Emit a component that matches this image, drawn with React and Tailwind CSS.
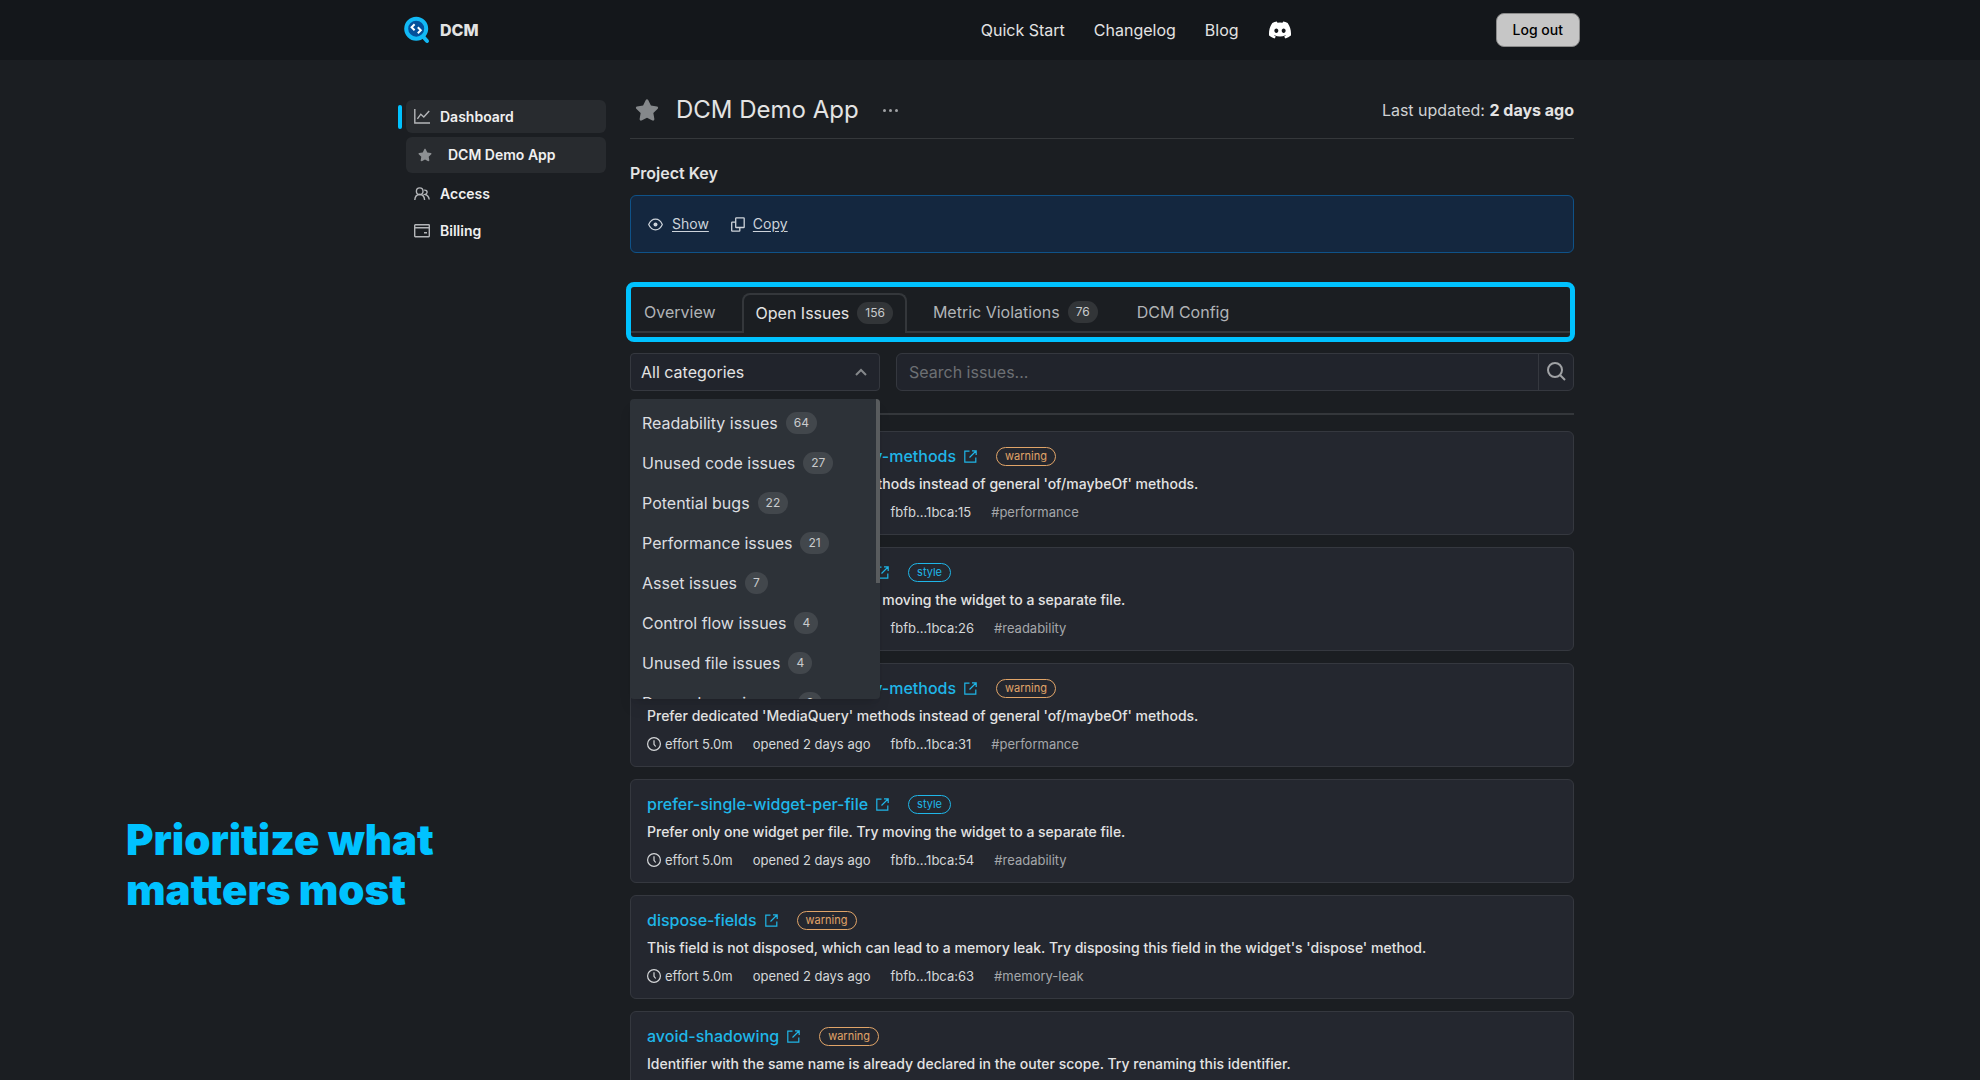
import { useState } from 'react';
import { FaDiscord, FaStar } from 'react-icons/fa';

const categories = [
  { name: 'Readability issues', count: 64 },
  { name: 'Unused code issues', count: 27 },
  { name: 'Potential bugs', count: 22 },
  { name: 'Performance issues', count: 21 },
  { name: 'Asset issues', count: 7 },
  { name: 'Control flow issues', count: 4 },
  { name: 'Unused file issues', count: 4 },
  { name: 'Dependency issues', count: 3 },
];

const mediaQuery = "Prefer dedicated 'MediaQuery' methods instead of general 'of/maybeOf' methods.";
const singleWidget = 'Prefer only one widget per file. Try moving the widget to a separate file.';

const issues = [
  { rule: 'prefer-dedicated-media-query-methods', severity: 'warning', text: mediaQuery, line: 15, tag: '#performance' },
  { rule: 'prefer-single-widget-per-file', severity: 'style', text: singleWidget, line: 26, tag: '#readability' },
  { rule: 'prefer-dedicated-media-query-methods', severity: 'warning', text: mediaQuery, line: 31, tag: '#performance' },
  { rule: 'prefer-single-widget-per-file', severity: 'style', text: singleWidget, line: 54, tag: '#readability' },
  {
    rule: 'dispose-fields',
    severity: 'warning',
    text: "This field is not disposed, which can lead to a memory leak. Try disposing this field in the widget's 'dispose' method.",
    line: 63,
    tag: '#memory-leak',
  },
  {
    rule: 'avoid-shadowing',
    severity: 'warning',
    text: 'Identifier with the same name is already declared in the outer scope. Try renaming this identifier.',
    line: 78,
    tag: '#readability',
  },
];

const tabs = [
  { id: 'overview', label: 'Overview' },
  { id: 'issues', label: 'Open Issues', count: 156 },
  { id: 'metrics', label: 'Metric Violations', count: 76 },
  { id: 'config', label: 'DCM Config' },
];

function Logo() {
  return (
    <svg width="26" height="28" viewBox="0 0 26 28" fill="none" aria-hidden="true">
      <path d="M19 20.500l4 4.500" stroke="#12b9f5" strokeWidth="4" strokeLinecap="round" />
      <circle cx="12.200" cy="12.700" r="10" fill="#04509b" stroke="#12b9f5" strokeWidth="4" />
      <path d="M10.600 8.200L7.600 11.200l3 3M13.800 11.200l3 3-3 3" stroke="#fff" strokeWidth="2" />
    </svg>
  );
}

function ChartIcon() {
  return (
    <svg width="16" height="15" viewBox="0 0 16 15" fill="none" stroke="currentColor" strokeWidth="1.400" aria-hidden="true">
      <path d="M.8 0v14h15.200" />
      <path d="M3.400 9.800l3.400-4.600 3 2.800 5.400-6" />
    </svg>
  );
}

function PeopleIcon() {
  return (
    <svg width="16" height="14" viewBox="0 0 16 14" fill="none" stroke="currentColor" strokeWidth="1.400" aria-hidden="true">
      <circle cx="5.700" cy="4.200" r="3.300" />
      <path d="M.8 13c.2-3.400 2-5.500 4.900-5.500s4.700 2.100 4.900 5.500" />
      <path d="M10.200 3.200c1.900-.3 3 .7 2.900 2.100-.1 1.100-.9 1.900-1.900 2.200 2.200.6 3.600 2.300 4 5" />
    </svg>
  );
}

function CardIcon() {
  return (
    <svg width="16" height="14" viewBox="0 0 16 14" fill="none" stroke="currentColor" strokeWidth="1.400" aria-hidden="true">
      <rect x=".7" y=".7" width="14.600" height="12" rx=".6" />
      <path d="M.7 3.700h14.600M10 8.700h3" />
    </svg>
  );
}

function EyeIcon() {
  return (
    <svg width="15" height="13" viewBox="0 0 15 13" fill="none" stroke="currentColor" strokeWidth="1.200" aria-hidden="true">
      <path d="M.7 6.500C2.200 3 4.500 1.200 7.500 1.200s5.300 1.800 6.800 5.300c-1.500 3.500-3.800 5.300-6.800 5.300S2.200 10 .7 6.500z" />
      <circle cx="7.500" cy="6.500" r="2" fill="currentColor" stroke="none" />
    </svg>
  );
}

function CopyIcon() {
  return (
    <svg width="14" height="15" viewBox="0 0 14 15" fill="none" stroke="currentColor" strokeWidth="1.300" aria-hidden="true">
      <rect x="4.700" y=".8" width="8.500" height="9.700" rx=".6" />
      <path d="M4.700 5.200H1.200a.5.500 0 0 0-.5.500v8a.5.500 0 0 0 .5.500h7.100a.5.500 0 0 0 .5-.5v-3.200" />
    </svg>
  );
}

function ExternalIcon() {
  return (
    <svg width="13" height="13" viewBox="0 0 13 13" fill="none" stroke="currentColor" strokeWidth="1.200" aria-hidden="true">
      <path d="M5.500 1.200H.8v11h11V7.500M8 .8h4.200V5M12 1L5.500 7.500" />
    </svg>
  );
}

function ClockIcon() {
  return (
    <svg width="14" height="14" viewBox="0 0 14 14" fill="none" stroke="currentColor" strokeWidth="1.200" aria-hidden="true">
      <circle cx="7" cy="7" r="6.400" />
      <path d="M7 3.200v4.100l1.700 2.200" />
    </svg>
  );
}

function SearchIcon() {
  return (
    <svg width="20" height="20" viewBox="0 0 20 20" fill="none" stroke="currentColor" strokeWidth="2" aria-hidden="true">
      <circle cx="9" cy="9" r="7" />
      <path d="M14 14l5 5" />
    </svg>
  );
}

function Header() {
  return (
    <header className="h-15 bg-[#14171b]">
      <div className="mx-auto flex h-full max-w-[1180px] items-center">
        <a href="#" className="ml-1 flex items-center gap-[10px] font-extrabold text-[#e3e3e3]">
          <Logo />
          DCM
        </a>
        <nav className="ml-auto flex items-center gap-[29px] text-[#e3e3e3]">
          <a href="#">Quick Start</a>
          <a href="#">Changelog</a>
          <a href="#">Blog</a>
          <a href="#" aria-label="Discord">
            <FaDiscord className="size-6 text-white" />
          </a>
        </nav>
        <button type="button" className="ml-[204px] h-[34px] rounded-lg border border-[#8a8a8a] bg-[#c6c6c6] px-4 text-sm font-medium text-black">
          Log out
        </button>
      </div>
    </header>
  );
}

function Sidebar() {
  return (
    <nav className="w-52 shrink-0 pt-10 text-sm font-semibold text-[#f0f0f0]">
      <div className="flex items-center gap-1">
        <span className="h-6 w-1 rounded-sm bg-[#00c2ff]" />
        <a href="#" className="flex h-[33px] flex-1 items-center gap-[10px] rounded-md bg-[#282b2f] px-2">
          <span className="text-[#b4b6b9]"><ChartIcon /></span>
          Dashboard
        </a>
      </div>
      <a href="#" className="mt-1 ml-2 flex h-9 items-center gap-4 rounded-md bg-[#282b2f] px-3">
        <FaStar className="size-[14px] text-[#8d9093]" />
        DCM Demo App
      </a>
      <a href="#" className="mt-1 ml-2 flex h-[33px] items-center gap-[10px] px-2">
        <span className="text-[#b4b6b9]"><PeopleIcon /></span>
        Access
      </a>
      <a href="#" className="mt-1 ml-2 flex h-[33px] items-center gap-[10px] px-2">
        <span className="text-[#b4b6b9]"><CardIcon /></span>
        Billing
      </a>
    </nav>
  );
}

function Count({ children }) {
  return (
    <span className="rounded-full bg-white/10 px-2 text-xs leading-[22px] text-[#c9cbcd]">{children}</span>
  );
}

function Tabs({ active, onChange }) {
  return (
    <div className="mt-[29px] -mr-px -ml-1 h-15 rounded-lg border-5 border-[#00c2ff] pt-[6px]">
      <div className="flex">
        {tabs.map((tab) => (
          <button
            key={tab.id}
            type="button"
            onClick={() => onChange(tab.id)}
            className={
              tab.id === active
                ? 'flex h-10 items-center gap-2 rounded-t-lg border-2 border-b-0 border-[#34373b] px-3 pb-[2px] text-[#e3e3e3]'
                : 'flex h-10 items-center gap-2 border-b-2 border-[#34373b] px-[13px] text-[#b1b4b7] first:pr-[26px] nth-3:px-[26px]'
            }
          >
            {tab.label}
            {tab.count && <Count>{tab.count}</Count>}
          </button>
        ))}
        <div className="flex-1 border-b-2 border-[#34373b]" />
      </div>
    </div>
  );
}

function CategoryFilter() {
  const [open, setOpen] = useState(true);

  return (
    <div className="relative w-[250px]">
      <button
        type="button"
        onClick={() => setOpen(!open)}
        className="flex h-[38px] w-full items-center justify-between rounded-sm border border-[#35383f] bg-[#21242c] pr-3 pl-[10px] text-[#e3e3e3]"
      >
        All categories
        <svg width="12" height="8" viewBox="0 0 12 8" fill="none" stroke="#85888b" strokeWidth="2" aria-hidden="true">
          <path d="M1 7l5-5 5 5" />
        </svg>
      </button>
      {open && (
        <div className="absolute top-[46px] left-0 z-10 flex h-[300px] w-full justify-between overflow-hidden rounded-sm bg-[#2d3238] shadow-lg">
          <ul className="pt-1">
            {categories.map((category) => (
              <li key={category.name}>
                <button type="button" className="flex h-10 items-center gap-2 pl-3 text-[#dcdee0]">
                  {category.name}
                  <Count>{category.count}</Count>
                </button>
              </li>
            ))}
          </ul>
          <span className="h-[184px] w-1 bg-[#595c5e]" />
        </div>
      )}
    </div>
  );
}

function IssueCard({ issue }) {
  return (
    <li className="flex h-26 flex-col rounded-md border border-[#35383f] bg-[#24272f] px-4 pt-3">
      <div className="flex h-6 items-center">
        <a href="#" className="flex items-center gap-2 font-medium text-[#1fb6e8]">
          {issue.rule}
          <ExternalIcon />
        </a>
        <span
          className={
            issue.severity === 'warning'
              ? 'ml-[19px] rounded-full border border-[#e0a468] px-2 text-[11px] leading-[17px] text-[#e0a468]'
              : 'ml-[19px] rounded-full border border-[#1fb6e8] px-2 text-[11px] leading-[17px] text-[#1fb6e8]'
          }
        >
          {issue.severity}
        </span>
      </div>
      <p className="mt-[6px] text-sm leading-5 font-medium text-[#e3e3e3]">{issue.text}</p>
      <div className="mt-2 flex items-center gap-5 text-[13px] leading-5 text-[#d5d7d9]">
        <span className="flex items-center gap-1">
          <ClockIcon />
          effort 5.0m
        </span>
        <span>opened 2 days ago</span>
        <span>fbfb...1bca:{issue.line}</span>
        <span className="text-[#a5a7ab]">{issue.tag}</span>
      </div>
    </li>
  );
}

function App() {
  const [tab, setTab] = useState('issues');
  const [query, setQuery] = useState('');

  return (
    <div className="relative h-screen overflow-hidden bg-[#1b1e22] font-['Inter',sans-serif] text-base text-[#e3e3e3]">
      <Header />
      <div className="mx-auto flex max-w-[1184px] gap-6 pr-2">
        <Sidebar />
        <main className="min-w-0 flex-1 pt-7">
          <div className="flex h-[51px] items-center border-b border-[#35383b] pb-[6px]">
            <FaStar className="ml-[5px] size-6 text-[#85888b]" />
            <h1 className="ml-[17px] text-2xl">DCM Demo App</h1>
            <button type="button" aria-label="Project menu" className="ml-6 flex gap-[3px]">
              <span className="size-[3px] rounded-full bg-[#a0a2a5]" />
              <span className="size-[3px] rounded-full bg-[#a0a2a5]" />
              <span className="size-[3px] rounded-full bg-[#a0a2a5]" />
            </button>
            <p className="ml-auto text-[#cfd1d3]">
              Last updated: <strong className="font-bold text-[#e3e3e3]">2 days ago</strong>
            </p>
          </div>

          <h2 className="mt-[22px] font-semibold">Project Key</h2>
          <div className="mt-[10px] flex h-[58px] items-center gap-[22px] rounded-md border border-[#0f5288] bg-[#14273f] px-[17px] text-sm text-[#cdd3da]">
            <button type="button" className="flex items-center gap-[9px]">
              <EyeIcon />
              <span className="underline underline-offset-2">Show</span>
            </button>
            <button type="button" className="flex items-center gap-2">
              <CopyIcon />
              <span className="underline underline-offset-2">Copy</span>
            </button>
          </div>

          <Tabs active={tab} onChange={setTab} />

          <div className="mt-[11px] flex gap-4">
            <CategoryFilter />
            <div className="flex h-[38px] flex-1 rounded-md border border-[#35383f] bg-[#21242c]">
              <input
                type="text"
                aria-label="Search issues"
                placeholder="Search issues..."
                value={query}
                onChange={(e) => setQuery(e.target.value)}
                className="min-w-0 flex-1 px-3 outline-none placeholder:text-[#6d7074]"
              />
              <button type="button" aria-label="Search" className="flex w-[35px] items-center justify-center border-l border-[#35383f] pb-[2px] text-[#a0a2a5]">
                <SearchIcon />
              </button>
            </div>
          </div>

          <hr className="mt-[22px] border-t-2 border-[#34373b]" />

          <ul className="mt-4 flex flex-col gap-3">
            {issues.map((issue) => (
              <IssueCard key={issue.line} issue={issue} />
            ))}
          </ul>
        </main>
      </div>

      {/* caption laid over the page */}
      <p className="absolute bottom-[165px] left-[126px] w-80 text-[42px] leading-[50px] font-black text-[#00c2ff]">
        Prioritize what matters most
      </p>
    </div>
  );
}

export default App;
